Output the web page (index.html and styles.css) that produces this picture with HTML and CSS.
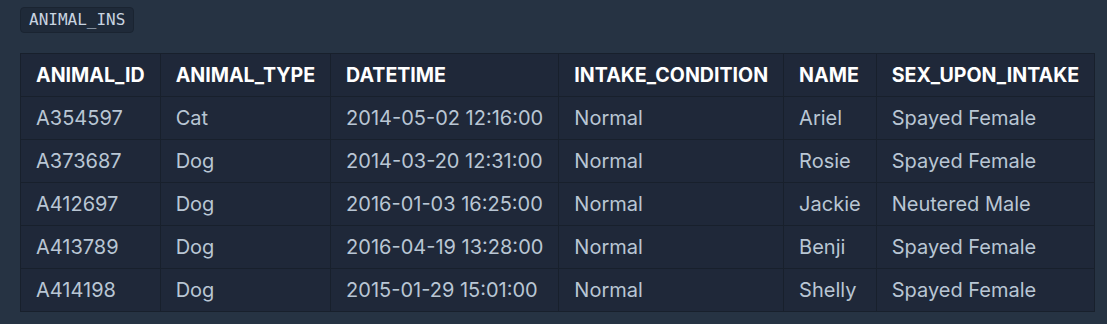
FILE: index.html
```html
<!DOCTYPE html>
<html lang="en">
<head>
    <meta charset="UTF-8">
    <meta name="viewport" content="width=device-width, initial-scale=1.0">
    <title>ANIMAL_INS</title>
    <link rel="stylesheet" href="styles.css">
</head>
<body>

    <div class="result">
        <span class="table-name">ANIMAL_INS</span>

        <table class="grid">
            <thead>
                <tr>
                    <th>ANIMAL_ID</th>
                    <th>ANIMAL_TYPE</th>
                    <th>DATETIME</th>
                    <th>INTAKE_CONDITION</th>
                    <th>NAME</th>
                    <th>SEX_UPON_INTAKE</th>
                </tr>
            </thead>
            <tbody>
                <tr>
                    <td>A354597</td>
                    <td>Cat</td>
                    <td>2014-05-02 12:16:00</td>
                    <td>Normal</td>
                    <td>Ariel</td>
                    <td>Spayed Female</td>
                </tr>
                <tr>
                    <td>A373687</td>
                    <td>Dog</td>
                    <td>2014-03-20 12:31:00</td>
                    <td>Normal</td>
                    <td>Rosie</td>
                    <td>Spayed Female</td>
                </tr>
                <tr>
                    <td>A412697</td>
                    <td>Dog</td>
                    <td>2016-01-03 16:25:00</td>
                    <td>Normal</td>
                    <td>Jackie</td>
                    <td>Neutered Male</td>
                </tr>
                <tr>
                    <td>A413789</td>
                    <td>Dog</td>
                    <td>2016-04-19 13:28:00</td>
                    <td>Normal</td>
                    <td>Benji</td>
                    <td>Spayed Female</td>
                </tr>
                <tr>
                    <td>A414198</td>
                    <td>Dog</td>
                    <td>2015-01-29 15:01:00</td>
                    <td>Normal</td>
                    <td>Shelly</td>
                    <td>Spayed Female</td>
                </tr>
            </tbody>
        </table>
    </div>

</body>
</html>
```

FILE: styles.css
```css
* {
    box-sizing: border-box;
}

body {
    margin: 0;
    background-color: #263343;
    font-family: Inter, "Noto Sans", sans-serif;
}

.result {
    padding: 7px 20px;
}

.table-name {
    display: inline-block;
    padding: 4px 8px;
    border: 1px solid #1a2431;
    border-radius: 4px;
    background-color: #1f2a39;
    color: #c9d4e0;
    font-family: "DejaVu Sans Mono", monospace;
    font-size: 16px;
    line-height: 16px;
}

.grid {
    margin-top: 20px;
    border-collapse: collapse;
    background-color: #1f2839;
    border: 1px solid #18202c;
}

.grid th,
.grid td {
    height: 43px;
    padding: 0 15px;
    border: 1px solid #18202c;
    text-align: left;
    white-space: nowrap;
    font-size: 20px;
}

.grid th {
    color: #ffffff;
    font-size: 19.6px;
    font-weight: 700;
}

.grid td {
    color: #b9c6d4;
}
```
